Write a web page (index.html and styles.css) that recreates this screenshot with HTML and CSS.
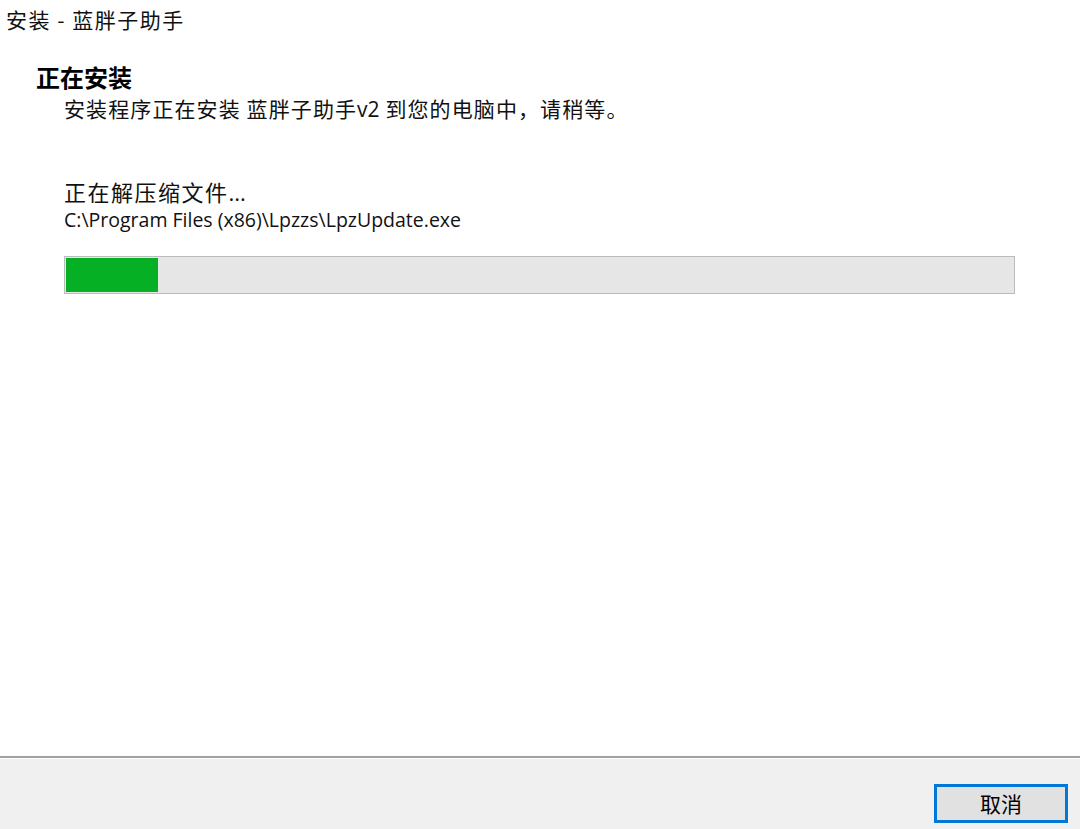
FILE: index.html
```html
<!DOCTYPE html>
<html lang="zh-CN">
<head>
<meta charset="utf-8">
<title>安装 - 蓝胖子助手</title>
<link rel="stylesheet" href="styles.css">
</head>
<body>
<div class="window">
  <div class="main">
    <div class="title">安装 - 蓝胖子助手</div>
    <div class="header">
      <div class="heading">正在安装</div>
      <div class="subtitle">安装程序正在安装 蓝胖子助手<span class="latin">v2</span> 到您的电脑中，请稍等。</div>
    </div>
    <div class="content">
      <div class="status">正在解压缩文件<span class="dots">...</span></div>
      <div class="path">C:\Program Files (x86)\Lpzzs\LpzUpdate.exe</div>
      <div class="progress"><div class="bar" style="width: 92px"></div></div>
    </div>
  </div>
  <div class="footer">
    <button class="btn">取消</button>
  </div>
</div>
</body>
</html>
```
FILE: styles.css
```css
html, body {
  margin: 0;
  padding: 0;
  background: #ffffff;
}
body {
  font-family: "Noto Sans CJK SC", "Liberation Sans", sans-serif;
  color: #000;
}
.window {
  width: 1080px;
  height: 829px;
  display: flex;
  flex-direction: column;
}
.main {
  height: 756px;
  background: #fff;
  display: flex;
  flex-direction: column;
}
.title {
  font-size: 21px;
  line-height: 26px;
  padding: 6px 0 0 6px;
  height: 33px;
  box-sizing: border-box;
  letter-spacing: 1.5px;
  color: #111;
}
.header {
  padding: 30px 0 0 36px;
}
.heading {
  font-size: 24px;
  font-weight: bold;
  line-height: 28px;
}
.subtitle {
  font-size: 21px;
  line-height: 26px;
  padding: 4px 0 0 28px;
  letter-spacing: 1.1px;
  color: #111;
}
.latin {
  font-family: "Open Sans", sans-serif;
  letter-spacing: 0;
}
.content {
  padding: 56px 0 0 64px;
}
.status {
  font-size: 22px;
  line-height: 26px;
  letter-spacing: 1.5px;
  color: #111;
}
.dots {
  font-family: "Open Sans", sans-serif;
  letter-spacing: 0;
}
.path {
  font-family: "Open Sans", sans-serif;
  font-size: 19.5px;
  line-height: 24px;
  margin-top: 3px;
  color: #111;
}
.progress {
  margin-top: 24px;
  width: 947px;
  height: 34px;
  border: 1px solid #bcbcbc;
  background: #e6e6e6;
  padding: 1px;
  box-sizing: content-box;
  display: flex;
}
.bar {
  height: 34px;
  background: #06b025;
}
.footer {
  flex: 1;
  background: #f0f0f0;
  border-top: 2px solid #a0a0a0;
  box-shadow: inset 0 1px 0 #ffffff;
  display: flex;
  justify-content: flex-end;
  align-items: flex-start;
  padding: 26px 12px 0 0;
}
.btn {
  width: 134px;
  height: 39px;
  border: 2px solid #0078d7;
  background: #e1e1e1;
  box-shadow: inset 0 0 0 1px #0078d7;
  font-family: "Noto Sans CJK SC", sans-serif;
  font-size: 21px;
  line-height: 1;
  color: #000;
  padding: 0;
}
```
